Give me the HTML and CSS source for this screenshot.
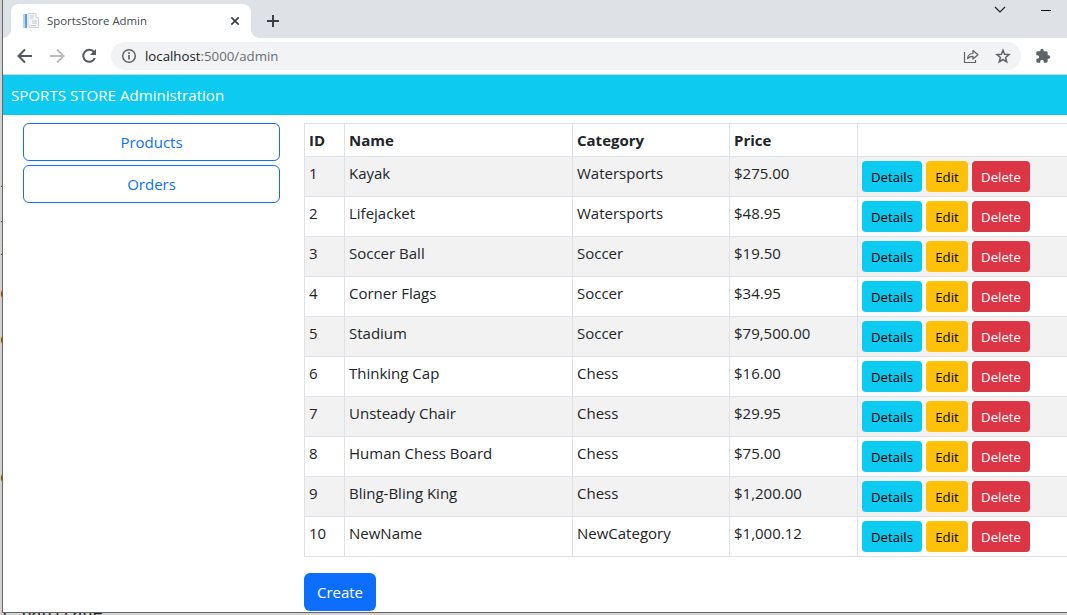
FILE: index.html
```html
<!DOCTYPE html>
<html lang="en">
<head>
<meta charset="utf-8">
<title>SportsStore Admin</title>
<link rel="stylesheet" href="styles.css">
</head>
<body>
<div class="desktop">
  <div class="behind">
    <span class="scrap" style="top:172px">i</span>
    <span class="scrap" style="top:216px">f</span>
    <span class="scrap" style="top:240px">i</span>
    <span class="scrap round" style="top:284px">c</span>
    <span class="scrap round" style="top:330px">c</span>
    <span class="scrap round" style="top:468px">c</span>
    <span class="scrap line">t pagitage</span>
  </div>
  <div class="window">
    <div class="tabstrip">
      <div class="tab">
        <svg class="favicon" width="16" height="16" viewBox="0 0 16 16"><path d="M5 .5h8v4h2.500v10H6V12H5z" fill="#f3f5f7" stroke="#d0d5da"/><path d="M7 3h4M7 5h3M9 8h5M9 10h5M8 12.500h5" stroke="#c3cad0"/><path d="M0 1h4v14H0z" fill="#bcd7ec"/><path d="M2 1h2v14H2z" fill="#5d9fd2"/></svg>
        <span class="tab-title">SportsStore Admin</span>
        <svg class="tab-close" width="10" height="10" viewBox="0 0 10 10"><path d="M1.300 1.300l7.400 7.400M8.700 1.300L1.300 8.700" stroke="#3c4043" stroke-width="1.700"/></svg>
      </div>
      <svg class="new-tab" width="12" height="12" viewBox="0 0 12 12"><path d="M6 0v12M0 6h12" stroke="#3c4043" stroke-width="2"/></svg>
      <svg class="chevron" width="12" height="8" viewBox="0 0 12 8"><path d="M1 1l5 5 5-5" fill="none" stroke="#222" stroke-width="1.200"/></svg>
      <svg class="minimize" width="10" height="2" viewBox="0 0 10 2"><path d="M0 .5h10" stroke="#000"/></svg>
    </div>
    <div class="toolbar">
      <svg class="nav-icon" width="16" height="16" viewBox="0 0 16 16"><path d="M15 8H2M8 1.500L1.500 8 8 14.500" fill="none" stroke="#55595e" stroke-width="2"/></svg>
      <svg class="nav-icon" width="16" height="16" viewBox="0 0 16 16"><path d="M1 8h13M8 1.500L14.500 8 8 14.500" fill="none" stroke="#babcbe" stroke-width="2"/></svg>
      <svg class="nav-icon" width="16" height="16" viewBox="0 0 16 16"><path d="M13.200 4.300A6 6 0 1 0 13.900 10" fill="none" stroke="#55595e" stroke-width="2"/><path d="M15 1v6H9z" fill="#55595e"/></svg>
      <div class="address">
        <svg width="16" height="16" viewBox="0 0 16 16"><circle cx="8" cy="8" r="6.300" fill="none" stroke="#5f6368" stroke-width="1.500"/><path d="M8 7v4.500M8 4.300V6" stroke="#5f6368" stroke-width="1.700"/></svg>
        <span class="url">localhost<span class="url-path">:5000/admin</span></span>
        <svg class="share" width="16" height="16" viewBox="0 0 16 16"><path d="M1.500 4v10.500H12.500V12M4.500 10.500c.5-3.500 2.500-5 5.500-5V2.500l5 4.300-5 4.200V8.300C7.500 8.300 6 9 4.500 10.500z" fill="none" stroke="#5f6368" stroke-width="1.200" stroke-linejoin="round"/></svg>
        <svg width="16" height="16" viewBox="0 0 16 16"><path d="M8 2.200l1.600 4 4.400.3-3.400 2.900 1.100 4.400L8 11.500l-3.700 2.300 1.100-4.400L2 6.500l4.400-.3z" fill="none" stroke="#5f6368" stroke-width="1.500"/></svg>
      </div>
      <svg class="puzzle" width="16" height="16" viewBox="0 0 24 24"><path fill="#5f6368" d="M20.500 11H19V7c0-1.100-.9-2-2-2h-4V3.500a2.500 2.500 0 0 0-5 0V5H4c-1.100 0-2 .9-2 2v3.800h1.500a2.700 2.700 0 0 1 0 5.400H2V20c0 1.100.9 2 2 2h3.800v-1.500a2.700 2.700 0 0 1 5.400 0V22H17c1.100 0 2-.9 2-2v-4h1.500a2.500 2.500 0 0 0 0-5z"/></svg>
    </div>
    <header class="banner"><span>SPORTS STORE Administration</span></header>
    <main class="content">
      <nav class="sidebar">
        <a class="nav-button">Products</a>
        <a class="nav-button">Orders</a>
      </nav>
      <section class="catalog">
        <table class="products">
          <colgroup><col class="c-id"><col class="c-name"><col class="c-category"><col class="c-price"><col></colgroup>
          <thead><tr><th>ID</th><th>Name</th><th>Category</th><th>Price</th><th></th></tr></thead>
          <tbody>
            <tr><td>1</td><td>Kayak</td><td>Watersports</td><td>$275.00</td><td><div class="actions"><a class="btn details">Details</a><a class="btn edit">Edit</a><a class="btn delete">Delete</a></div></td></tr>
            <tr><td>2</td><td>Lifejacket</td><td>Watersports</td><td>$48.95</td><td><div class="actions"><a class="btn details">Details</a><a class="btn edit">Edit</a><a class="btn delete">Delete</a></div></td></tr>
            <tr><td>3</td><td>Soccer Ball</td><td>Soccer</td><td>$19.50</td><td><div class="actions"><a class="btn details">Details</a><a class="btn edit">Edit</a><a class="btn delete">Delete</a></div></td></tr>
            <tr><td>4</td><td>Corner Flags</td><td>Soccer</td><td>$34.95</td><td><div class="actions"><a class="btn details">Details</a><a class="btn edit">Edit</a><a class="btn delete">Delete</a></div></td></tr>
            <tr><td>5</td><td>Stadium</td><td>Soccer</td><td>$79,500.00</td><td><div class="actions"><a class="btn details">Details</a><a class="btn edit">Edit</a><a class="btn delete">Delete</a></div></td></tr>
            <tr><td>6</td><td>Thinking Cap</td><td>Chess</td><td>$16.00</td><td><div class="actions"><a class="btn details">Details</a><a class="btn edit">Edit</a><a class="btn delete">Delete</a></div></td></tr>
            <tr><td>7</td><td>Unsteady Chair</td><td>Chess</td><td>$29.95</td><td><div class="actions"><a class="btn details">Details</a><a class="btn edit">Edit</a><a class="btn delete">Delete</a></div></td></tr>
            <tr><td>8</td><td>Human Chess Board</td><td>Chess</td><td>$75.00</td><td><div class="actions"><a class="btn details">Details</a><a class="btn edit">Edit</a><a class="btn delete">Delete</a></div></td></tr>
            <tr><td>9</td><td>Bling-Bling King</td><td>Chess</td><td>$1,200.00</td><td><div class="actions"><a class="btn details">Details</a><a class="btn edit">Edit</a><a class="btn delete">Delete</a></div></td></tr>
            <tr><td>10</td><td>NewName</td><td>NewCategory</td><td>$1,000.12</td><td><div class="actions"><a class="btn details">Details</a><a class="btn edit">Edit</a><a class="btn delete">Delete</a></div></td></tr>
          </tbody>
        </table>
        <a class="create">Create</a>
      </section>
    </main>
  </div>
</div>
</body>
</html>
```
FILE: styles.css
```css
* { box-sizing: border-box; }
body {
  margin: 0;
  overflow: hidden;
  font-family: "Open Sans", "Noto Sans", sans-serif;
  font-size: 15px;
  line-height: 24px;
  color: #212529;
}
svg { display: block; flex: none; }
.desktop {
  position: relative;
  height: 615px;
  padding-left: 2px;
  background: #d2d2d2;
  overflow: hidden;
}
.behind {
  font-family: "Liberation Mono", monospace;
  font-size: 18px;
  line-height: 20px;
  color: #222;
}
.scrap { position: absolute; left: 0; }
.scrap.round { color: #48301c; }
.scrap.line { top: 604px; left: 1px; white-space: pre; font-size: 17px; }
.window {
  position: relative;
  height: 613px;
  border-left: 1px solid #666;
  border-bottom: 1px solid #666;
  background: #fff;
  overflow: hidden;
}
.tabstrip {
  display: flex;
  height: 38px;
  background: #dee1e6;
}
.tab {
  position: relative;
  display: flex;
  align-items: center;
  width: 240px;
  height: 34px;
  margin: 4px 0 0 8px;
  padding: 0 11px 0 12px;
  background: #fff;
  border-radius: 8px 8px 0 0;
}
.tab::before,
.tab::after {
  content: "";
  position: absolute;
  bottom: 0;
  width: 8px;
  height: 8px;
}
.tab::before { left: -8px; background: radial-gradient(circle at 0 0, #dee1e6 7.5px, #fff 8px); }
.tab::after { right: -8px; background: radial-gradient(circle at 100% 0, #dee1e6 7.5px, #fff 8px); }
.tab-title {
  flex: 1;
  margin-left: 8px;
  font-size: 11.400px;
  line-height: 16px;
  color: #45494d;
}
.new-tab { margin: 15px 0 0 16px; }
.chevron { margin: 6px 0 0 auto; }
.minimize { margin: 10px 16px 0 35px; }
.toolbar {
  display: flex;
  align-items: center;
  height: 37px;
  padding-left: 14px;
  border-bottom: 1px solid #d5d7da;
  background: #fff;
}
.nav-icon { margin-right: 16px; }
.address {
  display: flex;
  align-items: center;
  width: 910px;
  height: 28px;
  margin-left: -2px;
  padding: 0 10px;
  border-radius: 14px;
  background: #f1f3f4;
}
.url {
  flex: 1;
  margin-left: 8px;
  font-size: 13.250px;
  line-height: 20px;
  color: #202124;
}
.url-path { color: #696d72; }
.share { margin-right: 16px; }
.puzzle { margin-left: 14px; }
.banner {
  height: 40px;
  padding: 8px;
  background: #0dcaf0;
  color: #fff;
  font-size: 15.100px;
}
.content {
  display: flex;
  gap: 24px;
  padding: 8px 0 0 20px;
}
.sidebar {
  display: flex;
  flex: none;
  flex-direction: column;
  gap: 4px;
  width: 257px;
}
.nav-button {
  height: 38px;
  padding: 6px;
  border: 1px solid #0d6efd;
  border-radius: 6px;
  color: #0d6efd;
  text-align: center;
}
.catalog { flex: none; width: 780px; }
.products {
  width: 100%;
  table-layout: fixed;
  border-collapse: collapse;
  margin-bottom: 16px;
}
.c-id { width: 40px; }
.c-name { width: 228px; }
.c-category { width: 157px; }
.c-price { width: 128px; }
.products th,
.products td {
  height: 40px;
  padding: 4px;
  border: 1px solid #dee2e6;
  text-align: left;
  vertical-align: top;
}
.products th { height: 33px; font-weight: 700; }
.products tbody tr:nth-child(odd) { background: #f2f2f2; }
.actions { display: flex; gap: 4px; }
.btn {
  height: 31px;
  padding-top: 6px;
  border-radius: 4px;
  font-size: 13.200px;
  line-height: 21px;
  text-align: center;
}
.details { width: 60px; background: #0dcaf0; color: #000; }
.edit { width: 42px; background: #ffc107; color: #000; }
.delete { width: 58px; background: #dc3545; color: #fff; }
.create {
  display: block;
  width: 72px;
  height: 38px;
  padding-top: 7px;
  border-radius: 6px;
  background: #0d6efd;
  color: #fff;
  text-align: center;
}
```
